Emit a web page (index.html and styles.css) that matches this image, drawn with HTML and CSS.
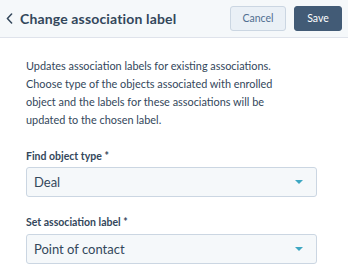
FILE: index.html
```html
<!DOCTYPE html>
<html lang="en">
<head>
    <meta charset="UTF-8">
    <title>Change association label</title>
    <link rel="stylesheet" href="styles.css">
</head>
<body>
    <div class="panel">
        <div class="header">
            <div class="title">
                <svg class="back" width="7" height="11" viewBox="0 0 7 11">
                    <path d="M5.6 1 L1.4 5.5 L5.6 10" fill="none" stroke="#33475b" stroke-width="1.5" stroke-linecap="round" stroke-linejoin="round"/>
                </svg>
                <h1>Change association label</h1>
            </div>
            <div class="actions">
                <button class="btn btn-cancel">Cancel</button>
                <button class="btn btn-save">Save</button>
            </div>
        </div>

        <div class="body">
            <p class="desc">Updates association labels for existing associations.<br>
                Choose type of the objects associated with enrolled<br>
                object and the labels for these associations will be<br>
                updated to the chosen label.</p>

            <div class="field">
                <label>Find object type *</label>
                <div class="select">
                    <span>Deal</span>
                    <span class="caret"></span>
                </div>
            </div>

            <div class="field">
                <label>Set association label *</label>
                <div class="select">
                    <span>Point of contact</span>
                    <span class="caret"></span>
                </div>
            </div>
        </div>
    </div>
</body>
</html>
```

FILE: styles.css
```css
* {
    margin: 0;
    padding: 0;
    box-sizing: border-box;
}

body {
    font-family: Lato, 'Liberation Sans', sans-serif;
    background: #fff;
    color: #33475b;
}

.header {
    height: 38px;
    background: #f5f8fa;
    border-bottom: 1px solid #dfe3eb;
    display: flex;
    align-items: center;
    justify-content: space-between;
    padding: 0 6px 0 6px;
}

.title {
    display: flex;
    align-items: center;
    gap: 7px;
}

.title h1 {
    font-size: 14px;
    font-weight: 700;
    letter-spacing: 0.15px;
    color: #33475b;
}

.actions {
    display: flex;
    gap: 8px;
    margin-top: -1px;
}

.btn {
    height: 25px;
    border-radius: 3px;
    font-family: inherit;
    font-size: 10.5px;
    cursor: pointer;
}

.btn-cancel {
    width: 56px;
    background: #eaf0f6;
    border: 1px solid #cbd6e2;
    color: #506e91;
}

.btn-save {
    width: 48px;
    background: #425b76;
    border: 1px solid #425b76;
    color: #fff;
}

.body {
    padding: 19px 31px 0 26px;
}

.desc {
    font-size: 10.9px;
    line-height: 18px;
    white-space: nowrap;
}

.field {
    margin-top: 19px;
}

.field + .field {
    margin-top: 17px;
}

.field label {
    display: block;
    font-size: 10.5px;
    line-height: 16px;
    font-weight: 700;
    margin-bottom: 3px;
}

.field + .field label {
    margin-bottom: 4px;
}

.select {
    height: 30px;
    background: #f5f8fa;
    border: 1px solid #cbd6e2;
    border-radius: 3px;
    display: flex;
    align-items: center;
    justify-content: space-between;
    padding: 0 13px 0 7px;
    font-size: 13px;
}

.caret {
    width: 0;
    height: 0;
    border-left: 4px solid transparent;
    border-right: 4px solid transparent;
    border-top: 4px solid #3ea7c2;
}
```
